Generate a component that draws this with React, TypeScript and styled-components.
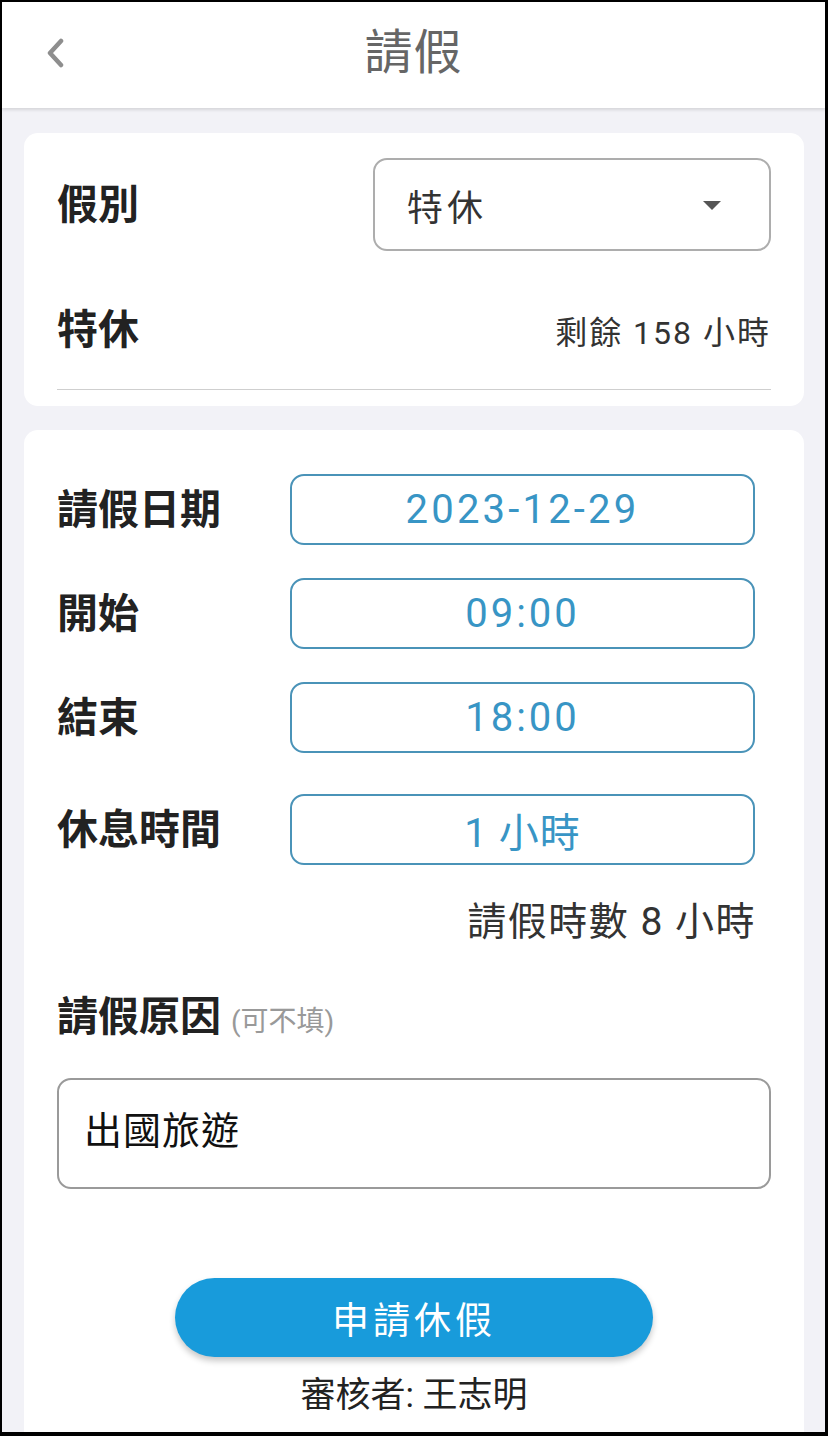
import styled, { createGlobalStyle } from "styled-components";

const GlobalStyle = createGlobalStyle`
  html, body {
    margin: 0;
    padding: 0;
    background: #000;
  }
  * {
    box-sizing: border-box;
  }
`;

const SFrame = styled.div`
  width: 828px;
  height: 1436px;
  border-style: solid;
  border-color: #000;
  border-width: 2px 3px 4px 2px;
  background: #f2f2f7;
  display: flex;
  flex-direction: column;
  overflow: hidden;
  font-family: Roboto, "Noto Sans CJK TC", sans-serif;
  color: #222;
`;

const SHeader = styled.div`
  height: 106px;
  flex-shrink: 0;
  background: #fff;
  display: flex;
  align-items: center;
  justify-content: center;
  position: relative;
  box-shadow: 0 2px 3px rgba(0, 0, 0, 0.12);
  z-index: 1;
`;

const SBack = styled.div`
  position: absolute;
  left: 38px;
  top: 33px;
  width: 30px;
  height: 36px;
  display: flex;
  align-items: center;
  justify-content: center;
`;

const STitle = styled.h1`
  margin: 0;
  font-size: 48px;
  font-weight: 400;
  color: #666;
  line-height: 1;
  margin-top: -4px;
  letter-spacing: 1px;
`;

const SBody = styled.div`
  flex: 1;
  display: flex;
  flex-direction: column;
  gap: 24px;
  padding: 25px 21px 0 22px;
`;

const SCard = styled.div<{ $grow?: boolean }>`
  background: #fff;
  border-radius: ${(p) => (p.$grow ? "14px 14px 0 0" : "14px")};
  padding: ${(p) => (p.$grow ? "44px 33px 0" : "25px 33px 16px")};
  flex: ${(p) => (p.$grow ? 1 : "none")};
  display: flex;
  flex-direction: column;
`;

const SRow = styled.div`
  display: flex;
  align-items: center;
  justify-content: space-between;
`;

const SLabel = styled.div`
  font-size: 41px;
  font-weight: 700;
  color: #222;
  line-height: 62px;
`;

const SSelect = styled.div`
  width: 398px;
  height: 93px;
  border: 2px solid #adadad;
  border-radius: 14px;
  display: flex;
  align-items: center;
  justify-content: space-between;
  padding: 0 48px 0 32px;
  font-size: 36px;
  letter-spacing: 4px;
  color: #333;
`;

const SCaret = styled.span`
  width: 0;
  height: 0;
  border-left: 9.5px solid transparent;
  border-right: 9.5px solid transparent;
  border-top: 9px solid #555;
  margin-top: 2px;
`;

const SBalanceRow = styled(SRow)`
  margin-top: 48px;
  padding-bottom: 28px;
  border-bottom: 1px solid #cfcfcf;
`;

const SBalance = styled.div`
  font-size: 32px;
  letter-spacing: 2px;
  color: #333;
`;

const SFieldGrid = styled.div`
  display: grid;
  grid-template-columns: 233px 465px;
  row-gap: 33px;
`;

const SFieldBox = styled.div<{ $extra?: number; $spacing?: number }>`
  height: 71px;
  border: 2px solid #4a93b8;
  border-radius: 14px;
  display: flex;
  align-items: center;
  justify-content: center;
  font-size: 40px;
  letter-spacing: ${(p) => p.$spacing ?? 3}px;
  color: #3895c5;
  margin-top: ${(p) => p.$extra ?? 0}px;
`;

const SFieldLabel = styled(SLabel)<{ $extra?: number }>`
  display: flex;
  align-items: center;
  margin-top: ${(p) => p.$extra ?? 0}px;
`;

const STotal = styled.div`
  margin-top: 33px;
  padding-right: 15px;
  text-align: right;
  font-size: 39px;
  letter-spacing: 1.5px;
  line-height: 48px;
  color: #333;
`;

const SReasonLabel = styled(SLabel)`
  margin-top: 44px;
  line-height: 54px;
`;

const SHint = styled.span`
  font-size: 28px;
  font-weight: 400;
  color: #999;
  margin-left: 10px;
`;

const STextArea = styled.div`
  margin-top: 29px;
  height: 111px;
  border: 2px solid #9a9a9a;
  border-radius: 14px;
  padding: 27px 25px 0;
  font-size: 38px;
  line-height: 48px;
  letter-spacing: 1px;
  color: #111;
`;

const SButton = styled.button`
  align-self: center;
  margin-top: 89px;
  width: 478px;
  height: 79px;
  border: none;
  border-radius: 40px;
  background: #189bdb;
  color: #fff;
  font-family: inherit;
  font-size: 37px;
  letter-spacing: 4px;
  box-shadow: 0 4px 6px rgba(0, 0, 0, 0.22);
`;

const SApprover = styled.div`
  margin-top: 16px;
  text-align: center;
  font-size: 35px;
  line-height: 46px;
  color: #222;
`;

const fields = [
  { label: "請假日期", value: "2023-12-29", extra: 0, spacing: 3.2 },
  { label: "開始", value: "09:00", extra: 0, spacing: 3 },
  { label: "結束", value: "18:00", extra: 0, spacing: 3 },
  { label: "休息時間", value: "1 小時", extra: 8, spacing: 1 },
];

function App() {
  return (
    <>
      <GlobalStyle />
      <SFrame>
        <SHeader>
          <SBack>
            <svg width="20" height="30" viewBox="0 0 20 30">
              <polyline
                points="16,3 5,15 16,27"
                fill="none"
                stroke="#8e8e8e"
                strokeWidth="4.5"
                strokeLinecap="round"
                strokeLinejoin="round"
              />
            </svg>
          </SBack>
          <STitle>請假</STitle>
        </SHeader>
        <SBody>
          <SCard>
            <SRow>
              <SLabel>假別</SLabel>
              <SSelect>
                <span>特休</span>
                <SCaret />
              </SSelect>
            </SRow>
            <SBalanceRow>
              <SLabel>特休</SLabel>
              <SBalance>剩餘 158 小時</SBalance>
            </SBalanceRow>
          </SCard>
          <SCard $grow>
            <SFieldGrid>
              {fields.map((f) => [
                <SFieldLabel key={f.label} $extra={f.extra}>
                  {f.label}
                </SFieldLabel>,
                <SFieldBox key={f.value} $extra={f.extra} $spacing={f.spacing}>
                  {f.value}
                </SFieldBox>,
              ])}
            </SFieldGrid>
            <STotal>請假時數 8 小時</STotal>
            <SReasonLabel>
              請假原因<SHint>(可不填)</SHint>
            </SReasonLabel>
            <STextArea>出國旅遊</STextArea>
            <SButton>申請休假</SButton>
            <SApprover>審核者: 王志明</SApprover>
          </SCard>
        </SBody>
      </SFrame>
    </>
  );
}

export default App;
